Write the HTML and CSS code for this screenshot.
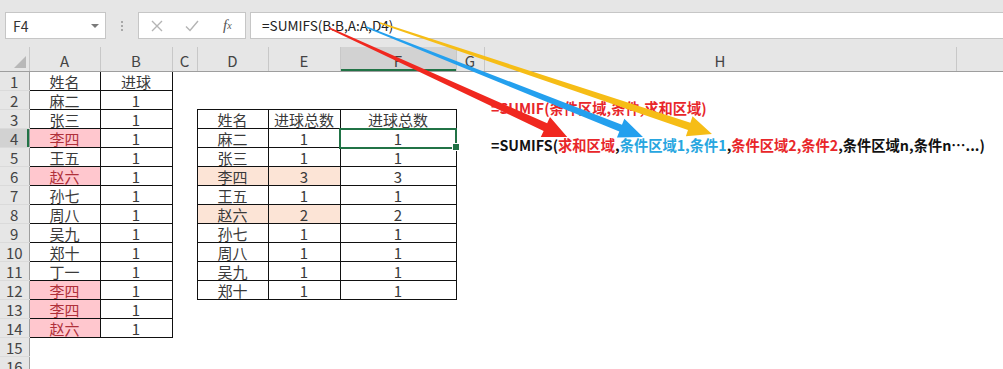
FILE: index.html
```html
<!DOCTYPE html>
<html lang="zh-CN">
<head>
    <meta charset="UTF-8">
    <meta name="viewport" content="width=device-width, initial-scale=1.0">
    <title>SUMIFS 多条件求和</title>
    <link rel="stylesheet" href="styles.css">
</head>
<body>
<div class="app">
    <!-- Name box + formula bar -->
    <div class="toolbar">
        <div class="namebox"><span>F4</span><span class="caret"></span></div>
        <div class="grip"><i></i><i></i><i></i></div>
        <div class="fxbox">
            <span class="slot">
                <svg width="12" height="12" viewBox="0 0 12 12"><path d="M1 1L11 11M11 1L1 11" stroke="#b4b4b4" stroke-width="1.4"/></svg>
            </span>
            <span class="slot">
                <svg width="14" height="12" viewBox="0 0 14 12"><path d="M1 6.5L5 10.5L13 1" fill="none" stroke="#b4b4b4" stroke-width="1.4"/></svg>
            </span>
            <span class="slot fx">f<sub>x</sub></span>
        </div>
        <div class="formula">=SUMIFS(B:B,A:A,D4)</div>
    </div>

    <!-- Worksheet -->
    <table class="sheet">
        <colgroup>
            <col style="width:29px"><col style="width:71px"><col style="width:72px"><col style="width:25px">
            <col style="width:71px"><col style="width:72px"><col style="width:116px"><col style="width:28px">
            <col style="width:472px"><col style="width:47px">
        </colgroup>
        <thead>
            <tr>
                <th class="corner"><svg width="12" height="12" viewBox="0 0 12 12"><path d="M12 0V12H0Z" fill="#b8b8b8"/></svg></th>
                <th>A</th><th>B</th><th>C</th><th>D</th><th>E</th><th class="on">F</th><th>G</th><th>H</th><th></th>
            </tr>
        </thead>
        <tbody>
            <tr><th>1</th><td class="c">姓名</td><td class="c">进球</td><td></td><td></td><td></td><td></td><td></td><td></td><td></td></tr>
            <tr><th>2</th><td class="c">麻二</td><td class="c">1</td><td></td><td></td><td></td><td></td><td></td><td></td><td></td></tr>
            <tr><th>3</th><td class="c">张三</td><td class="c">1</td><td></td><td class="c">姓名</td><td class="c">进球总数</td><td class="c">进球总数</td><td></td><td></td><td></td></tr>
            <tr><th class="on">4</th><td class="c dup">李四</td><td class="c">1</td><td></td><td class="c">麻二</td><td class="c">1</td><td class="c sel">1</td><td></td><td></td><td></td></tr>
            <tr><th>5</th><td class="c">王五</td><td class="c">1</td><td></td><td class="c">张三</td><td class="c">1</td><td class="c">1</td><td></td><td></td><td></td></tr>
            <tr><th>6</th><td class="c dup">赵六</td><td class="c">1</td><td></td><td class="c hit">李四</td><td class="c hit">3</td><td class="c">3</td><td></td><td></td><td></td></tr>
            <tr><th>7</th><td class="c">孙七</td><td class="c">1</td><td></td><td class="c">王五</td><td class="c">1</td><td class="c">1</td><td></td><td></td><td></td></tr>
            <tr><th>8</th><td class="c">周八</td><td class="c">1</td><td></td><td class="c hit">赵六</td><td class="c hit">2</td><td class="c">2</td><td></td><td></td><td></td></tr>
            <tr><th>9</th><td class="c">吴九</td><td class="c">1</td><td></td><td class="c">孙七</td><td class="c">1</td><td class="c">1</td><td></td><td></td><td></td></tr>
            <tr><th>10</th><td class="c">郑十</td><td class="c">1</td><td></td><td class="c">周八</td><td class="c">1</td><td class="c">1</td><td></td><td></td><td></td></tr>
            <tr><th>11</th><td class="c">丁一</td><td class="c">1</td><td></td><td class="c">吴九</td><td class="c">1</td><td class="c">1</td><td></td><td></td><td></td></tr>
            <tr><th>12</th><td class="c dup">李四</td><td class="c">1</td><td></td><td class="c">郑十</td><td class="c">1</td><td class="c">1</td><td></td><td></td><td></td></tr>
            <tr><th>13</th><td class="c dup">李四</td><td class="c">1</td><td></td><td></td><td></td><td></td><td></td><td></td><td></td></tr>
            <tr><th>14</th><td class="c dup">赵六</td><td class="c">1</td><td></td><td></td><td></td><td></td><td></td><td></td><td></td></tr>
            <tr><th>15</th><td></td><td></td><td></td><td></td><td></td><td></td><td></td><td></td><td></td></tr>
            <tr><th>16</th><td></td><td></td><td></td><td></td><td></td><td></td><td></td><td></td><td></td></tr>
        </tbody>
    </table>

    <!-- Floating text boxes -->
    <div class="note">
        <p class="red">=SUMIF(条件区域,条件,求和区域)</p>
        <p>=SUMIFS(<span class="red">求和区域</span>,<span class="blue">条件区域1,条件1</span>,<span class="red">条件区域2,条件2</span>,条件区域n,条件n…...)</p>
    </div>

    <!-- Arrows from the formula bar to the syntax -->
    <svg class="arrows" width="1003" height="369" viewBox="0 0 1003 369">
        <g transform="translate(380 23) rotate(18.48)">
            <polygon fill="#f6bd16" points="0,-0.8 326,-3.8 326,-10.5 350,0 326,10.5 326,3.8 0,0.8"/>
        </g>
        <g transform="translate(366 27) rotate(21.66)">
            <polygon fill="#24a0ee" points="0,-0.8 274,-3.6 274,-10 298,0 274,10 274,3.6 0,0.8"/>
        </g>
        <g transform="translate(329 28) rotate(24.6)">
            <polygon fill="#f0281f" points="0,-0.8 238,-4.2 238,-11 262,0 238,11 238,4.2 0,0.8"/>
        </g>
    </svg>
</div>
</body>
</html>
```

FILE: styles.css
```css
* {
    box-sizing: border-box;
}

body {
    margin: 0;
    background: #fff;
    color: #333;
    font-family: "Noto Sans CJK SC", sans-serif;
}

.app {
    position: relative;
    width: 1003px;
    height: 369px;
    overflow: hidden;
}

/* formula bar */
.toolbar {
    display: flex;
    align-items: flex-start;
    height: 47px;
    padding: 12px 0 0 5px;
    background: #e6e6e6;
}

.namebox {
    display: flex;
    align-items: center;
    justify-content: space-between;
    width: 101px;
    height: 27px;
    padding: 0 6px 0 7px;
    background: #fff;
    border: 1px solid #c6c6c6;
    font-size: 14px;
}

.caret {
    width: 0;
    height: 0;
    border-left: 4px solid transparent;
    border-right: 4px solid transparent;
    border-top: 4px solid #7a7a7a;
}

.grip {
    display: flex;
    flex-direction: column;
    align-items: center;
    justify-content: center;
    gap: 2px;
    width: 32px;
    height: 27px;
}

.grip i {
    width: 2px;
    height: 2px;
    background: #a8a8a8;
}

.fxbox {
    display: flex;
    width: 108px;
    height: 27px;
    background: #fff;
    border: 1px solid #c6c6c6;
}

.slot {
    display: flex;
    align-items: center;
    justify-content: center;
    width: 36px;
}

.fx {
    font-family: "Liberation Serif", serif;
    font-style: italic;
    font-size: 15px;
    color: #555;
}

.fx sub {
    font-size: 10px;
}

.formula {
    flex: 1;
    height: 27px;
    margin-left: 4px;
    padding-left: 11px;
    background: #fff;
    border: 1px solid #c6c6c6;
    border-right: none;
    font-size: 13.6px;
    line-height: 25px;
    color: #222;
}

/* grid */
.sheet {
    width: 1003px;
    table-layout: fixed;
    border-collapse: collapse;
    font-size: 15px;
}

.sheet th {
    padding: 0;
    background: #e6e6e6;
    font-weight: normal;
    color: #444;
}

.sheet thead th {
    height: 21px;
    line-height: 19px;
    padding-top: 3px;
    border-right: 1px solid #c8c8c8;
    border-bottom: 1px solid #9e9e9e;
}

.sheet thead th.corner {
    text-align: right;
    padding: 5px 3px 0 0;
}

.sheet tbody th {
    height: 19px;
    line-height: 17px;
    border-right: 1px solid #9e9e9e;
    border-bottom: 1px solid #dadada;
}

.sheet th.on {
    background: #d2d2d2;
}

.sheet thead th.on {
    box-shadow: inset 0 -2px 0 #217346;
}

.sheet tbody th.on {
    box-shadow: inset -2px 0 0 #217346;
}

.sheet td {
    height: 19px;
    padding: 0;
    line-height: 17px;
    text-align: center;
    color: #3a3a3a;
}

.sheet td.c {
    border: 1px solid #111;
}

.sheet td.dup {
    background: #ffc7ce;
    color: #b0303a;
}

.sheet td.hit {
    background: #fce4d6;
}

.sheet td.sel {
    position: relative;
    outline: 2px solid #217346;
    outline-offset: -1px;
}

.sheet td.sel::after {
    content: "";
    position: absolute;
    right: -4px;
    bottom: -4px;
    width: 6px;
    height: 6px;
    background: #217346;
    border: 1px solid #fff;
}

/* floating text boxes */
.note {
    position: absolute;
    left: 491px;
    top: 98px;
    font-size: 14.25px;
    font-weight: bold;
    color: #111;
}

.note p {
    margin: 0 0 17px;
    line-height: 20px;
}

.red {
    color: #e8262a;
}

.blue {
    color: #27a6e0;
}

.arrows {
    position: absolute;
    left: 0;
    top: 0;
    pointer-events: none;
}
```
